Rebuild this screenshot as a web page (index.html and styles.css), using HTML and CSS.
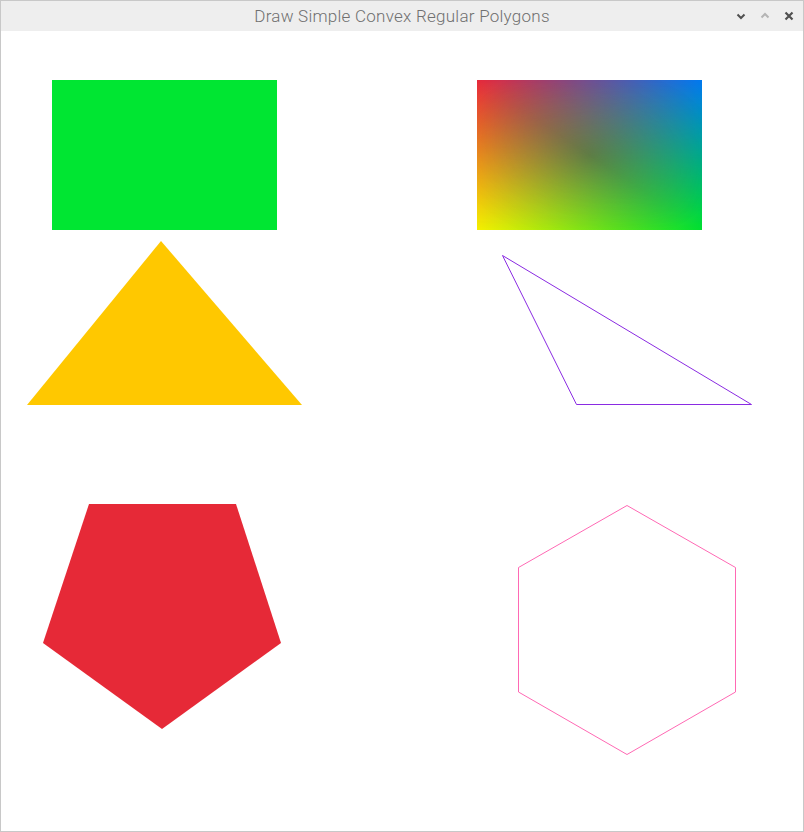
FILE: index.html
```html
<!DOCTYPE html>
<html>
<head>
<meta charset="utf-8">
<link rel="stylesheet" href="styles.css">
</head>
<body>
<div class="window">
  <div class="titlebar">
    <span class="title">Draw Simple Convex Regular Polygons</span>
    <div class="controls">
      <svg class="ctl" width="12" height="12" viewBox="0 0 12 12"><path d="M2.5 4.5 L6 8 L9.5 4.5" fill="none" stroke="#505050" stroke-width="2"/></svg>
      <svg class="ctl" width="12" height="12" viewBox="0 0 12 12"><path d="M2.5 7.5 L6 4 L9.5 7.5" fill="none" stroke="#b4b4b4" stroke-width="2"/></svg>
      <svg class="ctl" width="12" height="12" viewBox="0 0 12 12"><path d="M2.5 2.5 L9.5 9.5 M9.5 2.5 L2.5 9.5" fill="none" stroke="#505050" stroke-width="2.2"/></svg>
    </div>
  </div>
  <svg class="canvas" width="802" height="800" viewBox="1 31 802 800">
    <defs>
      <linearGradient id="topRow" x1="0" y1="0" x2="1" y2="0">
        <stop offset="0" stop-color="#e6283a"/>
        <stop offset="1" stop-color="#0078f0"/>
      </linearGradient>
      <linearGradient id="botRow" x1="0" y1="0" x2="1" y2="0">
        <stop offset="0" stop-color="#f5f000"/>
        <stop offset="1" stop-color="#00e030"/>
      </linearGradient>
      <linearGradient id="fade" x1="0" y1="0" x2="0" y2="1">
        <stop offset="0" stop-color="#fff"/>
        <stop offset="1" stop-color="#000"/>
      </linearGradient>
      <mask id="fadeMask" maskContentUnits="userSpaceOnUse">
        <rect x="477" y="80" width="225" height="150" fill="url(#fade)"/>
      </mask>
      <linearGradient id="shade" x1="0" y1="1" x2="1" y2="0">
        <stop offset="0" stop-color="#000" stop-opacity="0"/>
        <stop offset="0.5" stop-color="#000" stop-opacity="0.2"/>
        <stop offset="1" stop-color="#000" stop-opacity="0"/>
      </linearGradient>
      <radialGradient id="centerFade" cx="0.5" cy="0.5" r="0.62">
        <stop offset="0" stop-color="#fff"/>
        <stop offset="1" stop-color="#000"/>
      </radialGradient>
      <mask id="shadeMask" maskContentUnits="userSpaceOnUse">
        <rect x="477" y="80" width="225" height="150" fill="url(#centerFade)"/>
      </mask>
    </defs>
    <rect x="52" y="80" width="225" height="150" fill="#00e632"/>
    <rect x="477" y="80" width="225" height="150" fill="url(#botRow)"/>
    <rect x="477" y="80" width="225" height="150" fill="url(#topRow)" mask="url(#fadeMask)"/>
    <rect x="477" y="80" width="225" height="150" fill="url(#shade)" mask="url(#shadeMask)"/>
    <polygon points="161,241 302,405 27,405" fill="#ffc800"/>
    <polygon points="502.5,255.5 576.5,404.5 751.5,404.5" fill="none" stroke="#8a2be2" stroke-width="1"/>
    <polygon points="89,504 236,504 281,643 162,729 43,643" fill="#e62937"/>
    <polygon points="627,505.5 735.5,567.5 735.5,692 627,754.5 518.5,692 518.5,567.5" fill="none" stroke="#ff69b4" stroke-width="1"/>
  </svg>
</div>
</body>
</html>
```

FILE: styles.css
```css
html, body {
  margin: 0;
  padding: 0;
  background: #ffffff;
}
.window {
  width: 802px;
  height: 830px;
  border: 1px solid #c8c8c8;
  display: flex;
  flex-direction: column;
  background: #ffffff;
}
.titlebar {
  height: 30px;
  background: #eeeeee;
  display: flex;
  align-items: center;
  justify-content: center;
  position: relative;
}
.title {
  font-family: Roboto, "Noto Sans", sans-serif;
  font-weight: 300;
  font-size: 17px;
  color: #707070;
  letter-spacing: 0.25px;
}
.controls {
  position: absolute;
  right: 8px;
  top: 9px;
  display: flex;
  gap: 12px;
}
.ctl {
  display: block;
}
.canvas {
  display: block;
}
```
